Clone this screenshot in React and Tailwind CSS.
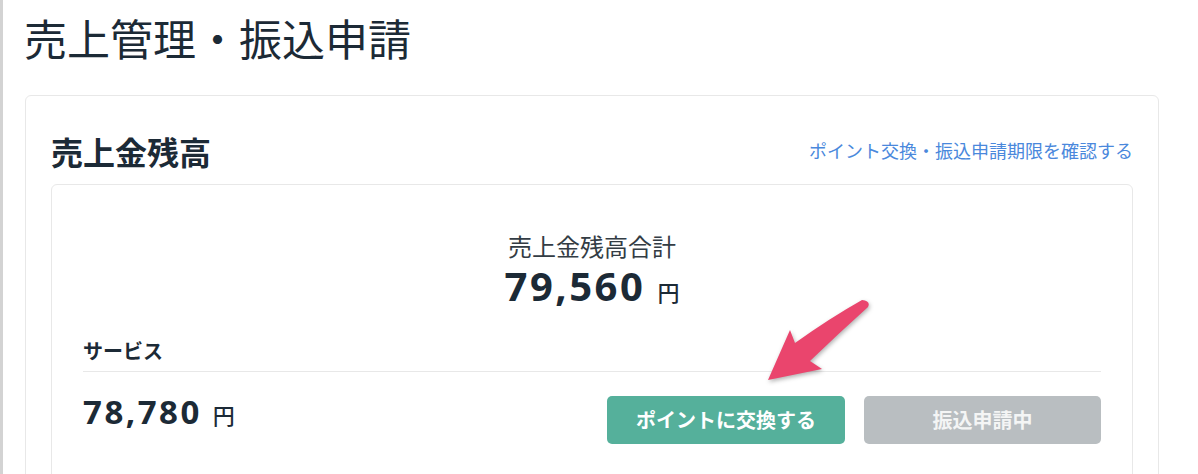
import React from 'react';

const jp = { fontFamily: '"Noto Sans CJK JP", "Noto Sans", sans-serif' };
const num = { fontFamily: '"Noto Sans", "Noto Sans CJK JP", sans-serif' };

function Arrow() {
    return (
        <svg
            className="absolute left-[737px] top-[290px] w-[140px] h-[100px] drop-shadow-[1px_2px_2px_rgba(0,0,0,0.3)]"
            viewBox="0 0 140 100"
        >
            <path
                d="M122 10 Q90 28 55 53 L50 40 L28 90 L82 79 L70 71 Q98 44 128 17 Q131 11 122 10 Z"
                fill="#ea456d"
            />
        </svg>
    );
}

export default function App() {
    const balance = { total: '79,560', service: '78,780' };

    return (
        <div className="relative w-[1198px] h-[474px] overflow-hidden bg-white border-l-[3px] border-[#d3d3d3] text-[#1c2a36]" style={jp}>
            <div className="pl-[22px] pr-[39px]">
                {/* Page title */}
                <h1 className="pt-[10px] text-[43px] leading-[54px] font-normal -ml-px">売上管理・振込申請</h1>

                {/* Balance card */}
                <section className="mt-[31px] rounded-md border border-[#e8e8e8] px-[25px] pt-[35px]">
                    <div className="flex justify-between items-center mb-[13px]">
                        <h2 className="text-[32px] leading-[40px] font-bold">売上金残高</h2>
                        <a className="text-[18px] leading-[26px] text-[#4a88dc] mt-[-2px]">ポイント交換・振込申請期限を確認する</a>
                    </div>

                    <div className="rounded-md border border-[#e8e8e8] px-[31px] pt-[47px] pb-10">
                        <div className="flex flex-col items-center">
                            <p className="text-[24px] leading-[28px] text-[#333c44]">売上金残高合計</p>
                            <p className="mt-[2px] flex items-baseline h-[48px]">
                                <span className="text-[40px] leading-[48px] font-bold tracking-[2.5px]" style={num}>{balance.total}</span>
                                <span className="ml-[12px] text-[22px] font-medium">円</span>
                            </p>
                        </div>

                        <p className="mt-[28px] pb-[7px] text-[20px] leading-[26px] font-bold border-b border-[#e8e8e8]">サービス</p>

                        <div className="mt-6 flex items-start justify-between">
                            <p className="flex items-baseline">
                                <span className="text-[33px] leading-[32px] font-bold tracking-[2.5px]" style={num}>{balance.service}</span>
                                <span className="ml-[11px] text-[22px] font-medium">円</span>
                            </p>
                            <div className="flex gap-[19px]">
                                <button className="w-[238px] h-[48px] rounded-[5px] bg-[#55b09b] text-white text-[20px] font-bold">ポイントに交換する</button>
                                <button className="w-[237px] h-[48px] rounded-[5px] bg-[#b9bec1] text-[#f4f5f5] text-[20px] font-bold" disabled>振込申請中</button>
                            </div>
                        </div>
                    </div>
                </section>
            </div>
            <Arrow />
        </div>
    );
}
